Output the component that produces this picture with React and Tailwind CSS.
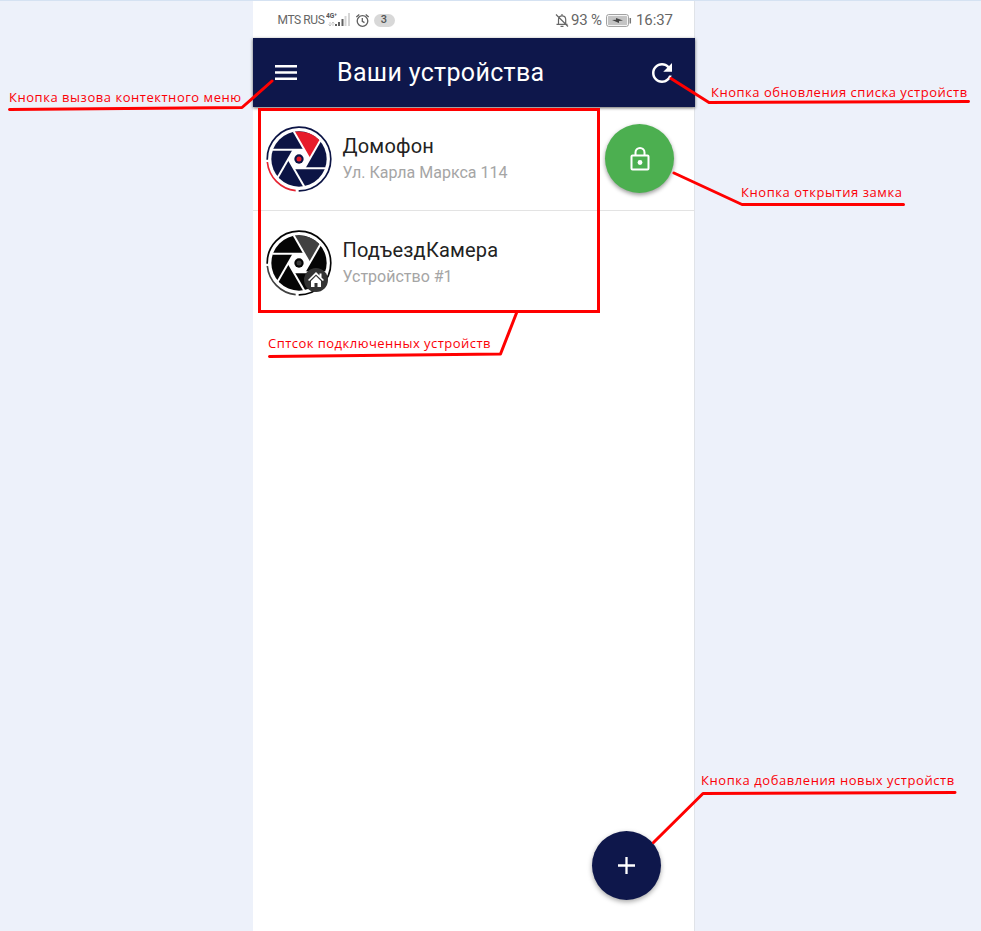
import React from "react";

const ROTATIONS = [0, 60, 120, 180, 240, 300];

function Shutter({ ink, accent, arc, hub }) {
  return (
    <svg viewBox="-99 -99 198 198" className="h-[66px] w-[66px]">
      <circle r="83" fill={ink} />
      <path d="M32 0L-14.5 -81.5A83 83 0 0 1 63.5 -53.5Z" fill={accent} />
      <path d="M32 0L16 28H-16L-32 0L-16 -28H16Z" fill="#fff" />
      {ROTATIONS.map((a) => (
        <path key={a} d="M32 0L-16 -83" transform={`rotate(${a})`} stroke="#fff" strokeWidth="6" />
      ))}
      <g fill="none" strokeWidth="5">
        <path d="M-95.4 2A95.4 95.4 0 1 1 -1 95.4" stroke={ink} />
        <path d="M-95 9A95.4 95.4 0 0 0 -10 94.9" stroke={arc} />
      </g>
      <circle r="14" fill={ink} />
      <circle r="7.500" fill={hub} />
    </svg>
  );
}

function StatusBar() {
  return (
    <div className="flex h-[38px] items-center justify-between bg-white pl-[24.500px] pr-[21px] text-[#666]">
      <div className="flex items-center pt-[2px]">
        <span className="w-[47px] whitespace-nowrap text-[12px] tracking-[-0.42px]">MTS RUS</span>
        <svg className="ml-px h-[16px] w-[25px]" viewBox="0 0 25 16">
          <text x="0" y="6" fontSize="7" fontWeight="700" fill="#555" textLength="11" lengthAdjust="spacingAndGlyphs">4G⁺</text>
          <path d="M4 10v4M2.500 12.500L4 14l1.500-1.500M7 14v-4M5.500 11.500L7 10l1.500 1.500" stroke="#bbb" strokeWidth="0.8" fill="none" />
          <path d="M9 12h2v2H9zM12 10h2v4h-2zM15.500 7h2v7h-2z" fill="#606060" />
          <path d="M18.500 4h2v10h-2zM22 1h2v13h-2z" fill="#d5d5d5" />
        </svg>
        <svg className="ml-[4px] h-[15px] w-[15px]" viewBox="0 0 15 15" fill="none" stroke="#606060" strokeWidth="1.3">
          <circle cx="7.500" cy="8" r="5.300" />
          <path d="M7.300 5v3.300l2.200 1.300M1.300 4L4.300 1.500M13.700 4l-3-2.500" />
        </svg>
        <span className="ml-[4px] flex h-[13px] w-[21px] items-center justify-center rounded-full bg-[#d8d8d8] text-[11px] font-medium text-[#555]">3</span>
      </div>
      <div className="flex items-center pt-[2px] text-[15px]">
        <svg className="h-[15px] w-[14px]" viewBox="0 0 14 15" fill="none" stroke="#666" strokeWidth="1.200">
          <path d="M1.500 11.300h11M3.500 11V6.500C3.500 4 5 2.800 7 2.800s3.700 1.200 3.700 3.700V11M7 1v2M5.500 13.300h3M1 1.500l12 12" />
        </svg>
        <span className="ml-[2px] w-[31px] whitespace-nowrap tracking-[-0.2px]">93 %</span>
        <svg className="ml-[4px] h-[13px] w-[26px]" viewBox="0 0 26 13">
          <rect x="0.600" y="0.600" width="21.800" height="11.800" rx="2" fill="#fff" stroke="#999" />
          <rect x="2" y="2" width="19" height="9" rx="0.500" fill="#c4c4c4" />
          <path d="M6 6l4-.3V4l7 2.600-4 .4v2z" fill="#444" />
          <path d="M24.300 4v5.500" stroke="#777" strokeWidth="1.500" />
        </svg>
        <span className="ml-[4px] w-[37px] whitespace-nowrap tracking-[-0.1px]">16:37</span>
      </div>
    </div>
  );
}

function Header() {
  return (
    <header className="relative z-10 flex h-[69px] items-center bg-[#0e174b] pl-[22px] pr-[23px] text-white shadow-[0_1px_3px_rgba(0,0,0,0.6)]">
      <svg className="h-[16px] w-[22px]" viewBox="0 0 22 16" fill="#fff">
        <path d="M0 0h22v2.500H0zM0 6.300h22v2.500H0zM0 12.500h22v2.500H0z" />
      </svg>
      <h1 className="ml-[40px] flex-1 whitespace-nowrap text-[25px] leading-[30px] tracking-[0.33px]">Ваши устройства</h1>
      <svg className="h-[20px] w-[20px]" viewBox="4 4 16 16" fill="#fff">
        <path d="M17.650 6.350C16.200 4.900 14.210 4 12 4c-4.420 0-7.990 3.580-7.990 8s3.570 8 7.990 8c3.730 0 6.840-2.550 7.730-6h-2.080c-.82 2.330-3.040 4-5.650 4-3.310 0-6-2.690-6-6s2.690-6 6-6c1.660 0 3.140.69 4.220 1.780L13 11h7V4z" />
      </svg>
    </header>
  );
}

function Device({ name, detail, icon, children }) {
  return (
    <div className="flex h-[104px] items-center border-b border-[#e3e3e3] pl-[12.500px] pr-[20px] last:border-transparent">
      <div className="relative">{icon}</div>
      <div className="ml-[11px] flex-1 whitespace-nowrap">
        <div className="-mt-px text-[20px] leading-[26px] tracking-[0.2px] text-[#222]">{name}</div>
        <div className="mt-[3px] text-[16px] leading-[22px] tracking-[0px] text-[#a5a5a5]">{detail}</div>
      </div>
      {children}
    </div>
  );
}

function HomeBadge() {
  return (
    <svg className="absolute left-[38px] top-[38.500px] h-[24px] w-[24px]" viewBox="0 0 24 24">
      <circle cx="12" cy="12" r="12" fill="#333" />
      <path d="M12 4L4 12l1.200 1L12 6.400 18.800 13l1.200-1-2.500-2.500V5.500h-2v2zM12 8l-5 5v6h3.500v-4h3v4H17v-6z" fill="#fff" />
    </svg>
  );
}

function Callouts() {
  return (
    <div className="pointer-events-none absolute inset-x-0 -top-px bottom-0 z-20 whitespace-nowrap font-['Open_Sans','Noto_Sans',sans-serif] text-[13px] leading-[18px] text-[#fb0007]">
      <div className="absolute left-[258px] top-[108px] h-[205px] w-[342px] border-[3px] border-[#ff0000]" />
      <svg className="absolute inset-0" width="981" height="931" fill="none" stroke="#ff0000" strokeWidth="3" strokeLinecap="round" strokeLinejoin="round">
        <path d="M9.500 109.500L242 107.500L272 81" />
        <path d="M671 78.500L709 102.500L968.500 101.500" />
        <path d="M674 173L742 204.500H903.500" />
        <path d="M269.500 356.500L500.500 354L516.500 313" />
        <path d="M653.500 842.500L703 793.500L955 792.500" />
      </svg>
      <span className="absolute left-[9px] top-[88px] tracking-[0.53px]">Кнопка вызова контектного меню</span>
      <span className="absolute left-[711px] top-[83px] tracking-[0.52px]">Кнопка обновления списка устройств</span>
      <span className="absolute left-[741px] top-[183px] tracking-[0.55px]">Кнопка открытия замка</span>
      <span className="absolute left-[268px] top-[334px] tracking-[0.47px]">Сптсок подключенных устройств</span>
      <span className="absolute left-[701px] top-[771px] tracking-[0.56px]">Кнопка добавления новых устройств</span>
    </div>
  );
}

export default function App() {
  return (
    <div className="relative h-[931px] w-[981px] overflow-hidden border-t border-[#d5e2f2] bg-[#edf1fa] font-['Roboto',sans-serif]">
      <main className="-mt-px ml-[253px] flex h-[931px] w-[442px] flex-col border-r border-[#e0e3e8] bg-white">
        <div className="h-px shrink-0 bg-[#d5e2f2]" />
        <div className="-mt-px"><StatusBar /></div>
        <div className="-mr-px"><Header /></div>
        <section>
          <Device name="Домофон" detail="Ул. Карла Маркса 114" icon={<Shutter ink="#0c1445" accent="#e71c2b" arc="#e62432" hub="#e71c2b" />}>
            <button className="flex h-[69px] w-[69px] items-center justify-center rounded-full bg-[#4caf50] shadow-[0_2px_4px_rgba(0,0,0,0.4)]">
              <svg className="h-[24px] w-[20px]" viewBox="0 0 20 24" fill="none" stroke="#fff" strokeWidth="2">
                <rect x="1.500" y="8.500" width="17" height="14" rx="1" />
                <path d="M5.500 8.500V5.500a4.500 4.500 0 0 1 9 0v3" />
                <circle cx="10" cy="15.500" r="2.400" fill="#fff" stroke="none" />
              </svg>
            </button>
          </Device>
          <Device name="ПодъездКамера" detail="Устройство #1" icon={<><Shutter ink="#050505" accent="#414141" arc="#414141" hub="#393939" /><HomeBadge /></>} />
        </section>
        <div className="mt-auto flex justify-end pb-[31px] pr-[33px]">
          <button className="flex h-[69px] w-[69px] items-center justify-center rounded-full bg-[#0e174b] shadow-[0_2px_5px_rgba(0,0,0,0.35)]">
            <svg className="h-[17px] w-[17px]" viewBox="0 0 17 17" stroke="#fff" strokeWidth="2.300"><path d="M0 8.500h17M8.500 0v17" /></svg>
          </button>
        </div>
      </main>
      <Callouts />
    </div>
  );
}
